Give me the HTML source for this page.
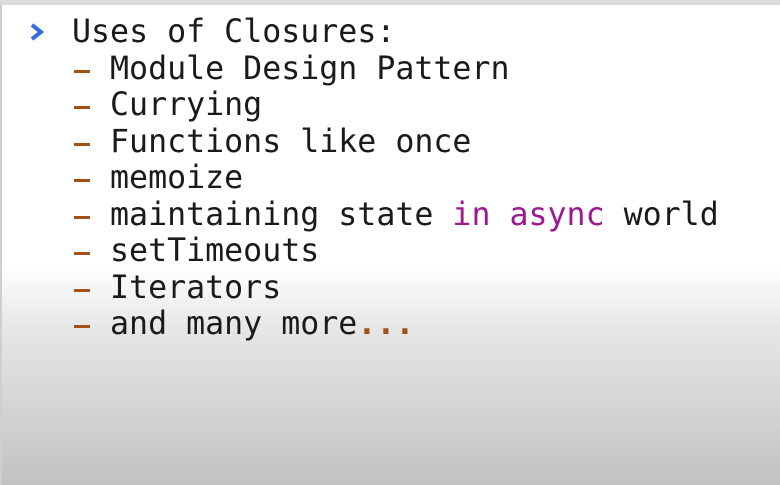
<!DOCTYPE html>
<html><head><style>
html,body{margin:0;padding:0;}
body{width:780px;height:485px;overflow:hidden;position:relative;
background:linear-gradient(to bottom,#fff 0px,#fff 265px,#e6e6e6 330px,#c2c2c2 485px);}
.top{position:absolute;left:0;top:0;width:780px;height:5px;background:#dcdcdc;}
.left{position:absolute;left:0;top:5px;width:2px;height:480px;background:#cfcfcf;}
pre{position:absolute;left:72px;top:14px;margin:0;font-family:"DejaVu Sans Mono","Liberation Mono",monospace;font-size:31.6px;line-height:36.5px;color:#1a1a1a;}
.d{color:#a0521b}.k{color:#9b1a8f}
.b{display:inline-block;width:19.02px;height:36.5px;position:relative;vertical-align:top;}
.b::after{content:"";position:absolute;left:2px;width:16px;top:19px;height:3px;background:#a0521b;}
.arr{position:absolute;left:29px;top:22px;}
</style></head><body>
<div class="top"></div><div class="left"></div>
<svg class="arr" width="16" height="20" viewBox="0 0 16 20"><path d="M3 3 L12 10 L3 17" fill="none" stroke="#2f6fe0" stroke-width="4"/></svg>
<pre>Uses of Closures:
<span class="b"></span> Module Design Pattern
<span class="b"></span> Currying
<span class="b"></span> Functions like once
<span class="b"></span> memoize
<span class="b"></span> maintaining state <span class="k">in async</span> world
<span class="b"></span> setTimeouts
<span class="b"></span> Iterators
<span class="b"></span> and many more<span class="d" style="font-weight:bold">...</span></pre>
</body></html>
